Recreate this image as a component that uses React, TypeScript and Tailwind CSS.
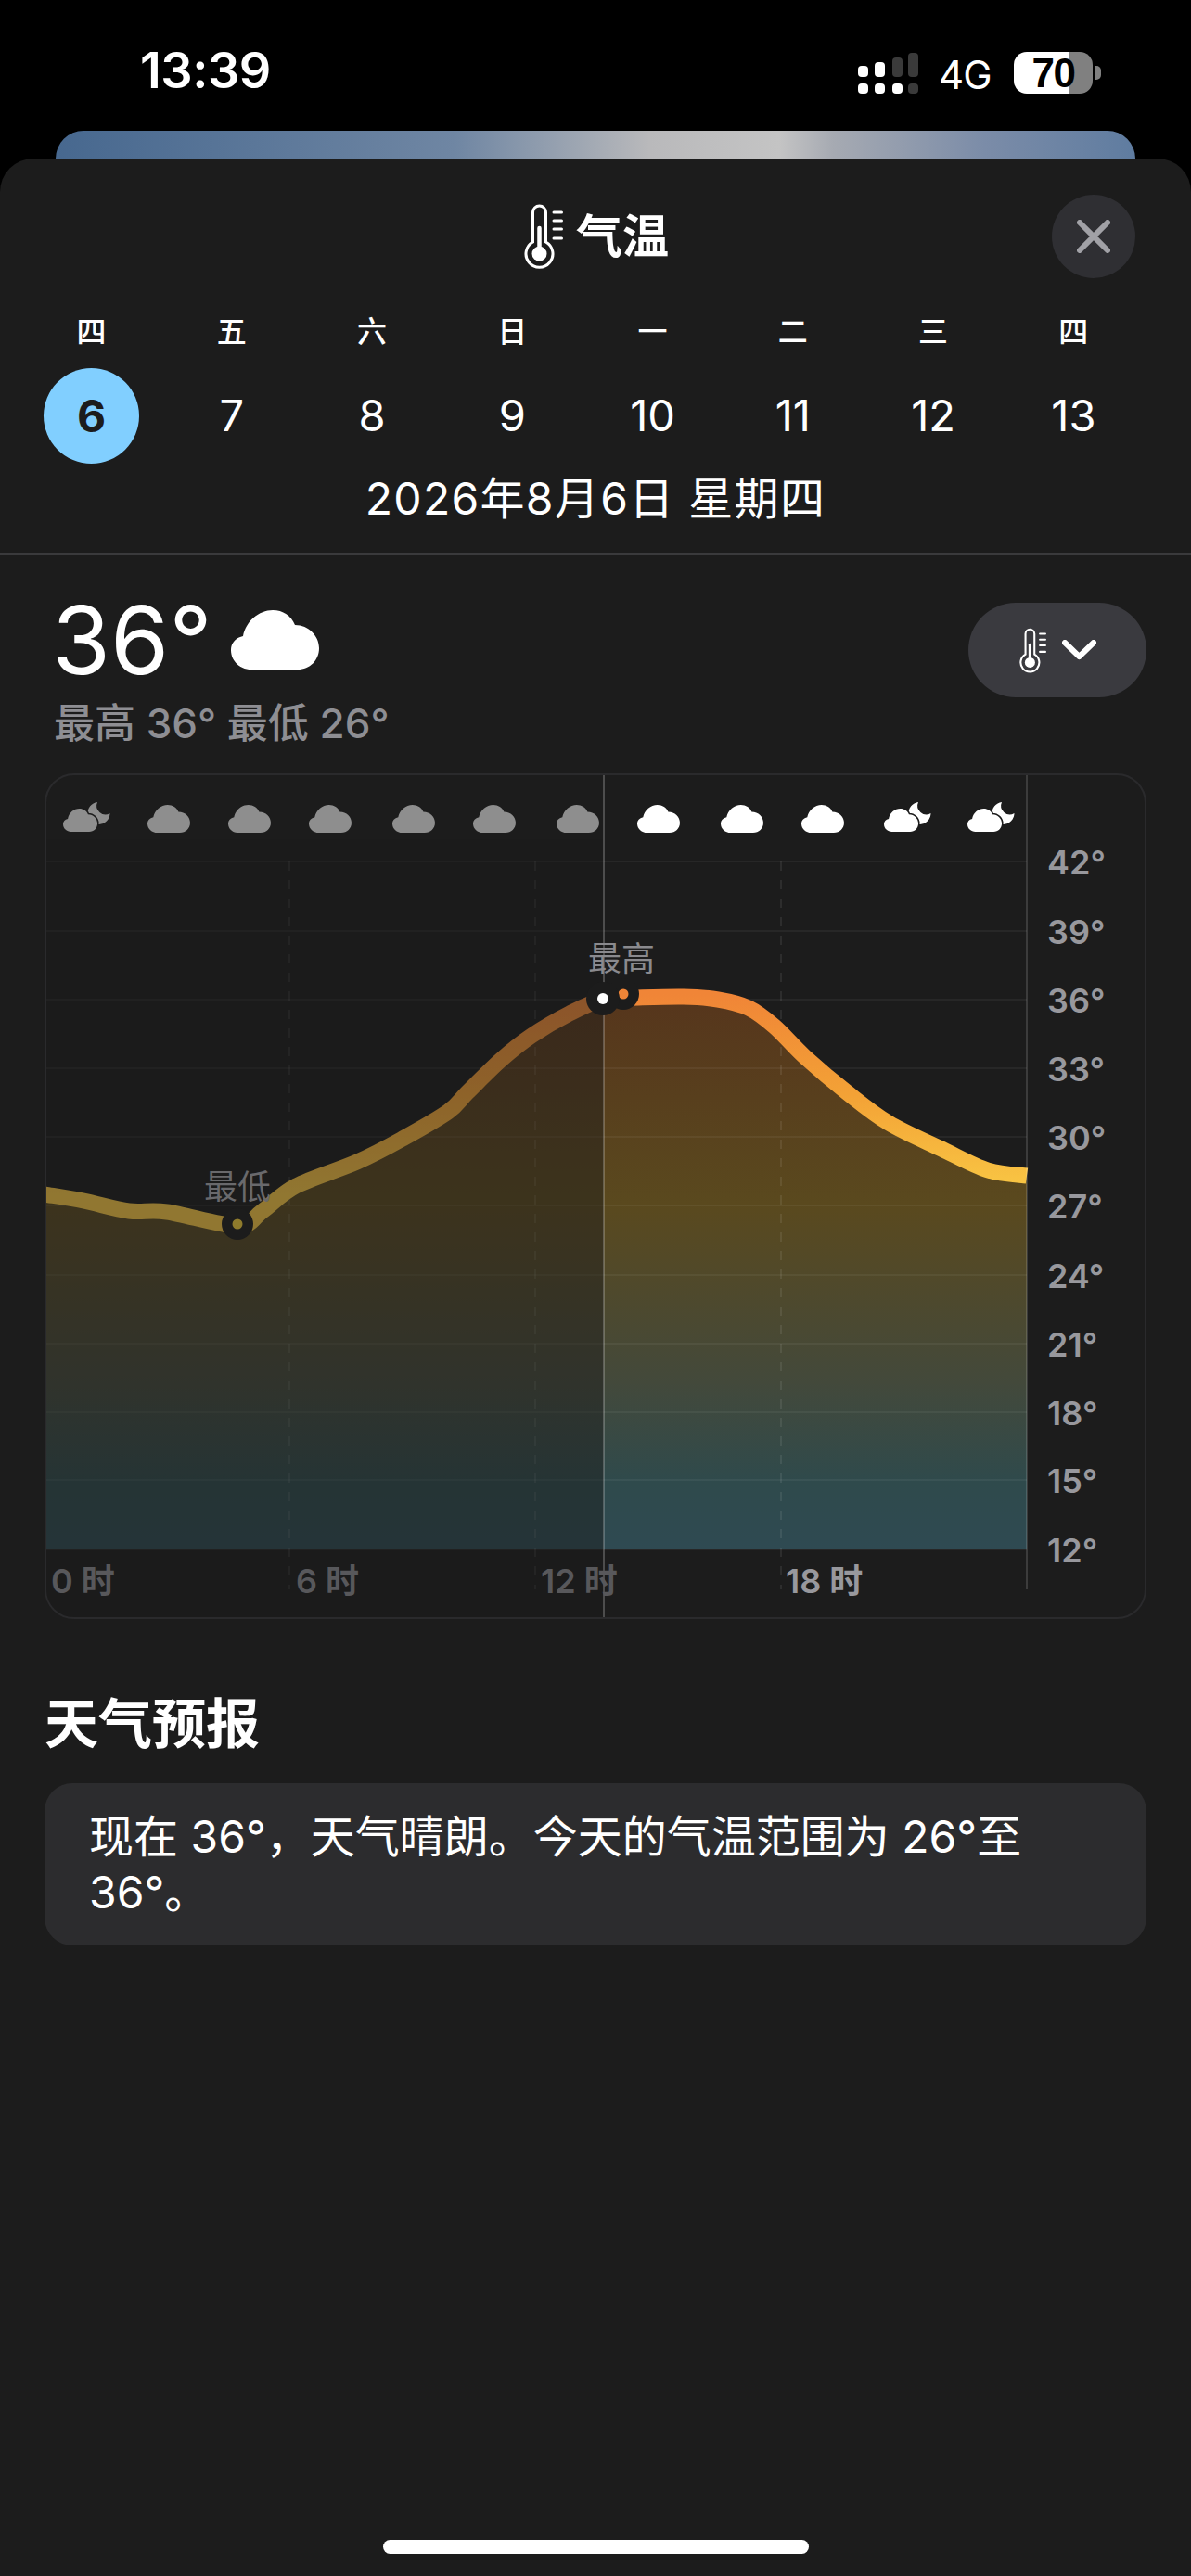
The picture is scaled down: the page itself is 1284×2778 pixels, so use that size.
const STACK = "font-['Inter','Noto_Sans_CJK_SC',sans-serif]";

const days = [
  ['四', '6'], ['五', '7'], ['六', '8'], ['日', '9'],
  ['一', '10'], ['二', '11'], ['三', '12'], ['四', '13'],
];

const pts: [number, number][] = [
  [48, 1288], [90, 1295], [139, 1306], [180, 1307], [256, 1322], [283, 1306], [319, 1279],
  [385, 1253], [434, 1228], [483, 1199], [504, 1178], [540, 1143], [573, 1117], [614, 1093],
  [650, 1078], [688, 1076], [737, 1075], [774, 1078], [807, 1087], [835, 1107], [868, 1140],
  [913, 1178], [958, 1211], [1015, 1239], [1065, 1262], [1107, 1268],
];

function smooth(p: [number, number][]) {
  let d = `M${p[0][0]} ${p[0][1]}`;
  for (let i = 0; i < p.length - 1; i++) {
    const a = p[Math.max(0, i - 1)];
    const b = p[i];
    const c = p[i + 1];
    const e = p[Math.min(p.length - 1, i + 2)];
    const c1x = b[0] + (c[0] - a[0]) / 6;
    const c1y = b[1] + (c[1] - a[1]) / 6;
    const c2x = c[0] - (e[0] - b[0]) / 6;
    const c2y = c[1] - (e[1] - b[1]) / 6;
    d += ` C${c1x.toFixed(1)} ${c1y.toFixed(1)} ${c2x.toFixed(1)} ${c2y.toFixed(1)} ${c[0]} ${c[1]}`;
  }
  return d;
}
const CURVE = smooth(pts);

const grid = [929, 1004, 1078, 1152, 1226, 1300, 1375, 1449, 1523, 1596, 1671];
const yLabels = ['42°', '39°', '36°', '33°', '30°', '27°', '24°', '21°', '18°', '15°', '12°'];
const cloudsGray = [182, 269, 356, 446, 533, 623];
const cloudsWhite = [710, 800, 887];

const CLOUD_D =
  'M22 64 C10 64 0 55 0 43 C0 35 5 30 13 28 C16 12 30 0 45 0 C56 0 65 6 69 16 C84 16 95 28 95 41 C95 54 85 64 72 64 Z';

function CloudShape({ x, y, fill }: { x: number; y: number; fill: string }) {
  return <path transform={`translate(${x - 23} ${y - 30}) scale(0.484 0.469)`} fill={fill} d={CLOUD_D} />;
}

function MoonCloud({ x, fill }: { x: number; fill: string }) {
  return (
    <g transform={`translate(${x - 90} 0)`}>
      <path fill={fill} d="M105 865 A12 12 0 1 0 118.5 877 A9.5 9.5 0 0 1 105 865 Z" />
      <path
        transform="translate(68 872) scale(0.39 0.39)"
        fill={fill}
        stroke="#1c1c1c"
        strokeWidth="8"
        paintOrder="stroke"
        d={CLOUD_D}
      />
    </g>
  );
}

function Thermo({ className }: { className: string }) {
  return (
    <svg viewBox="0 0 42 70" className={className} fill="none" stroke="currentColor">
      <path d="M9.5 41 V9 A7 7 0 0 1 23.5 9 V41 A14.5 14.5 0 1 1 9.5 41 Z" strokeWidth="3" />
      <line x1="16.5" y1="26" x2="16.5" y2="50" strokeWidth="4.5" strokeLinecap="round" />
      <circle cx="16.5" cy="53.7" r="8" fill="currentColor" stroke="none" />
      <path d="M32 9 H40.5 M32 18 H40.5 M32 27 H40.5 M32 37 H40.5" strokeWidth="3" strokeLinecap="round" />
    </svg>
  );
}

function TempChart() {
  return (
    <svg viewBox="50 836 1184 908" className="block w-full h-[908px]">
      <defs>
        <linearGradient id="fillG" gradientUnits="userSpaceOnUse" x1="0" y1="1070" x2="0" y2="1671">
          <stop offset="0" stopColor="#56351c" />
          <stop offset="0.38" stopColor="#5a491e" />
          <stop offset="0.7" stopColor="#43493b" />
          <stop offset="0.88" stopColor="#2f4a4c" />
          <stop offset="1" stopColor="#2f4a52" />
        </linearGradient>
        <linearGradient id="strokeG" gradientUnits="userSpaceOnUse" x1="0" y1="1072" x2="0" y2="1290">
          <stop offset="0" stopColor="#f08537" />
          <stop offset="0.5" stopColor="#f3a236" />
          <stop offset="1" stopColor="#f9c945" />
        </linearGradient>
      </defs>

      <path d={`${CURVE} L1107 1671 L48 1671 Z`} fill="url(#fillG)" />
      {grid.map((y) => (
        <line key={y} x1="48" x2="1107" y1={y} y2={y} stroke="#ffffff" strokeOpacity="0.05" strokeWidth="2" />
      ))}
      {[312, 577, 842].map((x) => (
        <line key={x} x1={x} x2={x} y1="929" y2="1714" stroke="#ffffff" strokeOpacity="0.08" strokeWidth="2" strokeDasharray="10 10" />
      ))}
      <path d={CURVE} fill="none" stroke="url(#strokeG)" strokeWidth="17" strokeLinejoin="round" />

      {/* dimmed past */}
      <rect x="48" y="905" width="603" height="840" fill="#1c1c1c" fillOpacity="0.47" />

      <line x1="1107" x2="1107" y1="834" y2="1714" stroke="#ffffff" strokeOpacity="0.14" strokeWidth="2" />
      <line x1="651" x2="651" y1="834" y2="1746" stroke="#ffffff" strokeOpacity="0.22" strokeWidth="2" />

      {cloudsGray.map((x) => (
        <CloudShape key={x} x={x} y={898} fill="#8e8e8e" />
      ))}
      {cloudsWhite.map((x) => (
        <CloudShape key={x} x={x} y={898} fill="#ffffff" />
      ))}
      <MoonCloud x={90} fill="#8e8e8e" />
      <MoonCloud x={975} fill="#ffffff" />
      <MoonCloud x={1065} fill="#ffffff" />

      {/* markers */}
      <circle cx="672" cy="1072" r="17" fill="#1c1c1c" />
      <circle cx="672" cy="1072" r="5.5" fill="#f08537" />
      <circle cx="650" cy="1077" r="18" fill="#1c1c1c" />
      <circle cx="650" cy="1077" r="6" fill="#ffffff" />
      <circle cx="256" cy="1320" r="17" fill="#1c1c1c" />
      <circle cx="256" cy="1320" r="5.5" fill="#8f7b2c" />

      <g fontFamily="'Noto Sans CJK SC', sans-serif">
        <text x="670" y="1047" textAnchor="middle" fontSize="36" fill="#8a8a8e">最高</text>
        <text x="256" y="1293" textAnchor="middle" fontSize="36" fill="#69696c">最低</text>
      </g>

      <g fontFamily="'Inter', 'Noto Sans CJK SC', sans-serif" fontWeight="600" fontSize="36">
        {yLabels.map((l, i) => (
          <text key={l} x="1129" y={grid[i] + 14} fill="#98989d">{l}</text>
        ))}
        <text x="55" y="1718" fill="#58585b">0 时</text>
        <text x="319" y="1718" fill="#58585b">6 时</text>
        <text x="583" y="1718" fill="#58585b">12 时</text>
        <text x="847" y="1718" fill="#98989d">18 时</text>
      </g>
    </svg>
  );
}

export default function App() {
  return (
    <div className={`${STACK} w-[1284px] h-[2778px] bg-black text-white overflow-hidden flex flex-col`}>
      {/* status bar */}
      <div className="h-[141px] shrink-0 pt-[50px] pl-[151px] pr-[97px] flex items-start justify-between">
        <span className="text-[54px] leading-[52px] font-semibold tracking-[-0.5px]">13:39</span>
        <div className="flex items-center mt-[3px]">
          <svg viewBox="0 0 66 44" className="w-[66px] h-[44px]">
            <g fill="#ffffff">
              <rect x="0" y="14" width="11" height="12" rx="4" />
              <rect x="18" y="10" width="11" height="16" rx="4" />
              <rect x="0" y="33" width="11" height="11" rx="4" />
              <rect x="18" y="33" width="11" height="11" rx="4" />
              <rect x="37" y="33" width="11" height="11" rx="4" />
            </g>
            <g fill="#3a3a3a">
              <rect x="37" y="5" width="11" height="21" rx="4" />
              <rect x="54" y="0" width="11" height="26" rx="4" />
              <rect x="54" y="33" width="11" height="11" rx="4" />
            </g>
          </svg>
          <span className="ml-[21px] w-[60px] mt-[5px] text-[42px] leading-[46px] font-normal tracking-[-1px]">4G</span>
          <div className="ml-[21px] w-[85px] h-[45px] rounded-[14px] bg-[linear-gradient(90deg,#ffffff_60px,#808080_60px)] flex items-center justify-center text-black text-[44px] leading-[45px] font-bold font-['Liberation_Sans',sans-serif] tracking-[-1.5px]">
            70
          </div>
          <div className="ml-[3px] w-[6px] h-[15px] bg-[#808080] rounded-r-[5px]" />
        </div>
      </div>

      {/* card behind sheet */}
      <div className="mx-[60px] h-[30px] shrink-0 rounded-t-[30px] bg-[linear-gradient(90deg,#47688f_0%,#6f86a3_37%,#b9b9bb_55%,#c4c4c4_67%,#a6aab2_72%,#7b8ca8_86%,#5f7ca0_100%)]" />

      {/* sheet */}
      <div className="flex-1 rounded-t-[36px] bg-[#1c1c1c] flex flex-col">
        <div className="relative h-[168px] shrink-0 flex justify-center">
          <div className="mt-[49px] ml-[2px] h-[70px] flex items-center gap-[14px]">
            <Thermo className="w-[42px] h-[70px] text-white" />
            <span className="text-[50px] leading-none font-bold">气温</span>
          </div>
          <button className="absolute top-[39px] right-[60px] w-[90px] h-[90px] rounded-full bg-[#2f2f33] flex items-center justify-center">
            <svg viewBox="0 0 36 36" className="w-[36px] h-[36px]" stroke="#a1a1a6" strokeWidth="6" strokeLinecap="round">
              <path d="M3 3 L33 33 M33 3 L3 33" />
            </svg>
          </button>
        </div>

        {/* week */}
        <div className="ml-[23px] w-[1210px] grid grid-cols-8">
          {days.map(([w, d], i) => (
            <div key={i} className="flex flex-col items-center">
              <span className="h-[38px] text-[32px] leading-[38px] font-medium">{w}</span>
              <div
                className={
                  i === 0
                    ? 'mt-[20px] w-[103px] h-[103px] rounded-full bg-[#81cfff] text-[#1c1c1c] font-bold flex items-center justify-center text-[48px]'
                    : 'mt-[20px] w-[103px] h-[103px] flex items-center justify-center text-[47px]'
                }
              >
                {d}
              </div>
            </div>
          ))}
        </div>

        <div className="h-[98px] pt-[8px] text-center text-[48px] leading-[60px] tracking-[1.3px] shrink-0 border-b-2 border-[#3a3a3c]">
          2026年8月6日 星期四
        </div>

        {/* summary */}
        <div className="px-[48px] pt-[52px] flex justify-between items-start h-[236px] shrink-0">
          <div className="pl-[10px]">
            <div className="flex items-center h-[80px]">
              <span className="ml-[-2px] w-[193px] text-[102px] leading-[80px] font-normal">36°</span>
              <svg viewBox="0 0 95 64" className="w-[95px] h-[64px]" fill="#ffffff">
                <path d={CLOUD_D} />
              </svg>
            </div>
            <div className="mt-[24px] text-[44px] leading-[52px] text-[#8e8e93] font-medium whitespace-nowrap">最高 36° 最低 26°</div>
          </div>
          <div className="w-[192px] h-[102px] rounded-[51px] bg-[#3a3a3f] flex items-center justify-center gap-[17px]">
            <Thermo className="w-[29px] h-[49px] text-white" />
            <svg viewBox="0 0 37 22" className="w-[37px] h-[22px]" fill="none" stroke="#ffffff" strokeWidth="6" strokeLinecap="round" strokeLinejoin="round">
              <path d="M3 3 L18.5 18 L34 3" />
            </svg>
          </div>
        </div>

        {/* chart */}
        <div className="mx-[48px] h-[912px] shrink-0 rounded-[32px] border-2 border-[#2a2a2c] overflow-hidden">
          <TempChart />
        </div>

        {/* forecast */}
        <div className="px-[48px]">
          <h2 className="mt-[77px] text-[58px] leading-[72px] font-bold">天气预报</h2>
          <div className="mt-[28px] h-[175px] rounded-[30px] bg-[#2c2c2e] pl-[48px] pr-[50px] pt-[28px] text-[48px] leading-[60px]">
            现在 36°，天气晴朗。今天的气温范围为 26°至 36°。
          </div>
        </div>

        <div className="mt-auto mb-[24px] mx-auto w-[459px] h-[15px] rounded-full bg-white" />
      </div>
    </div>
  );
}
